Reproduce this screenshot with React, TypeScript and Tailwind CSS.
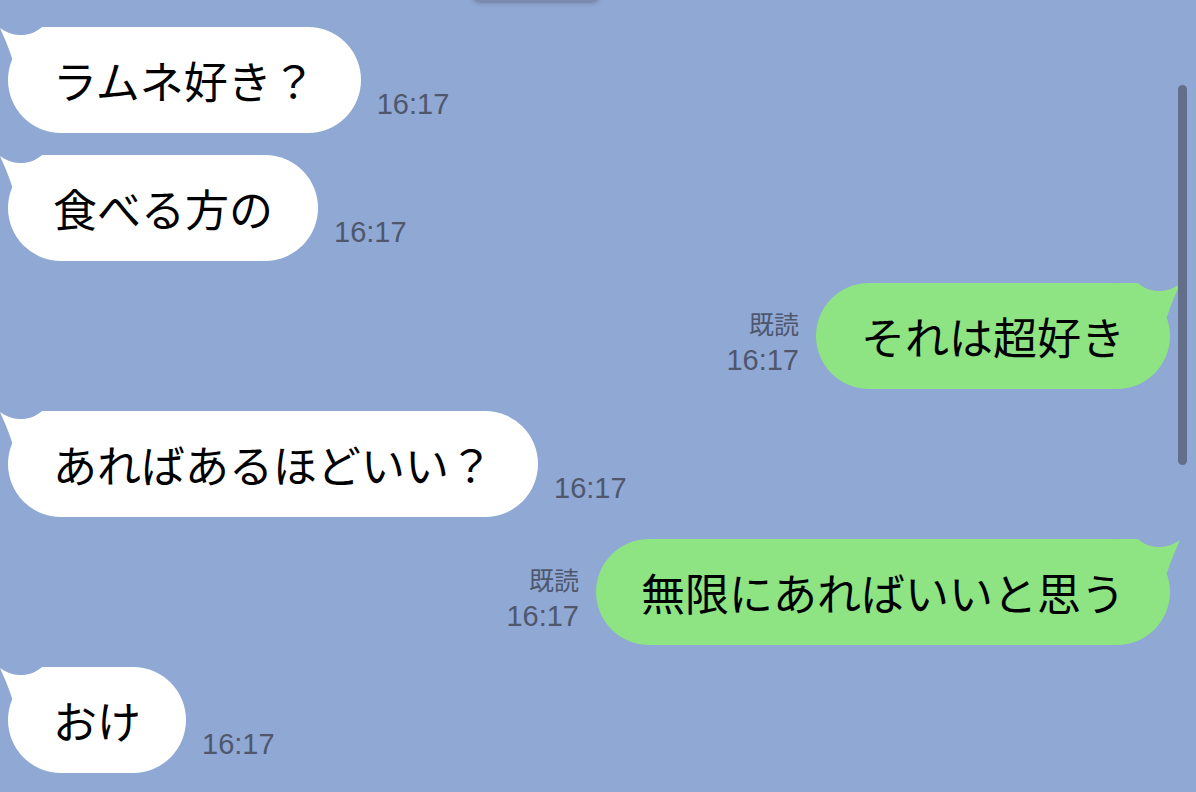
import React from "react";

type Msg = { text: string; mine: boolean; read?: boolean; time: string };

const messages: Msg[] = [
  { text: "ラムネ好き？", mine: false, time: "16:17" },
  { text: "食べる方の", mine: false, time: "16:17" },
  { text: "それは超好き", mine: true, read: true, time: "16:17" },
  { text: "あればあるほどいい？", mine: false, time: "16:17" },
  { text: "無限にあればいいと思う", mine: true, read: true, time: "16:17" },
  { text: "おけ", mine: false, time: "16:17" },
];

const jp = { fontFamily: '"Noto Sans CJK JP", "Noto Sans", sans-serif' };
const meta = { fontFamily: '"Liberation Sans", Arial, sans-serif' };

function Tail({ mine }: { mine: boolean }) {
  return (
    <svg
      width="60"
      height="40"
      viewBox="0 0 60 40"
      className={mine ? "absolute top-0 right-[-10px] -scale-x-100" : "absolute top-0 left-[-8px]"}
    >
      <path
        d="M60,0 L42,0 C32,9 16,12 0,1 C4,10 9,21 13,34 L40,40 L60,40 Z"
        fill={mine ? "#8ee383" : "#ffffff"}
      />
    </svg>
  );
}

function Bubble({ msg }: { msg: Msg }) {
  return (
    <div
      className={`relative h-[106px] flex items-center px-[45px] rounded-full text-[44px] leading-none text-black whitespace-nowrap ${
        msg.mine ? "bg-[#8ee383]" : "bg-white"
      }`}
      style={jp}
    >
      <Tail mine={msg.mine} />
      <span className="relative">{msg.text}</span>
    </div>
  );
}

export default function App() {
  return (
    <div className="relative w-[1196px] h-[792px] overflow-hidden bg-[#8fa8d4]">
      <div className="absolute left-[470px] top-[-20px] w-[132px] h-[23px] rounded-full bg-[#7b8bb0] shadow-[0_2px_3px_rgba(120,135,170,0.5)]" />

      <div className="flex flex-col gap-[22px] pt-[27px] pl-[8px] pr-[26px]">
        {messages.map((m, i) =>
          m.mine ? (
            <div key={i} className="flex items-end justify-end">
              <div className="flex flex-col items-end mr-[17px] mb-[14px] text-[#4f576d]">
                {m.read && (
                  <span className="text-[25px] leading-none mb-[10px]" style={jp}>
                    既読
                  </span>
                )}
                <span className="text-[29px] leading-none" style={meta}>
                  {m.time}
                </span>
              </div>
              <Bubble msg={m} />
            </div>
          ) : (
            <div key={i} className="flex items-end">
              <Bubble msg={m} />
              <span className="ml-[16px] mb-[14px] text-[29px] leading-none text-[#4f576d]" style={meta}>
                {m.time}
              </span>
            </div>
          )
        )}
      </div>

      <div className="absolute left-[1178px] top-[85px] w-[9px] h-[380px] rounded-full bg-[#636e8b]" />
    </div>
  );
}
